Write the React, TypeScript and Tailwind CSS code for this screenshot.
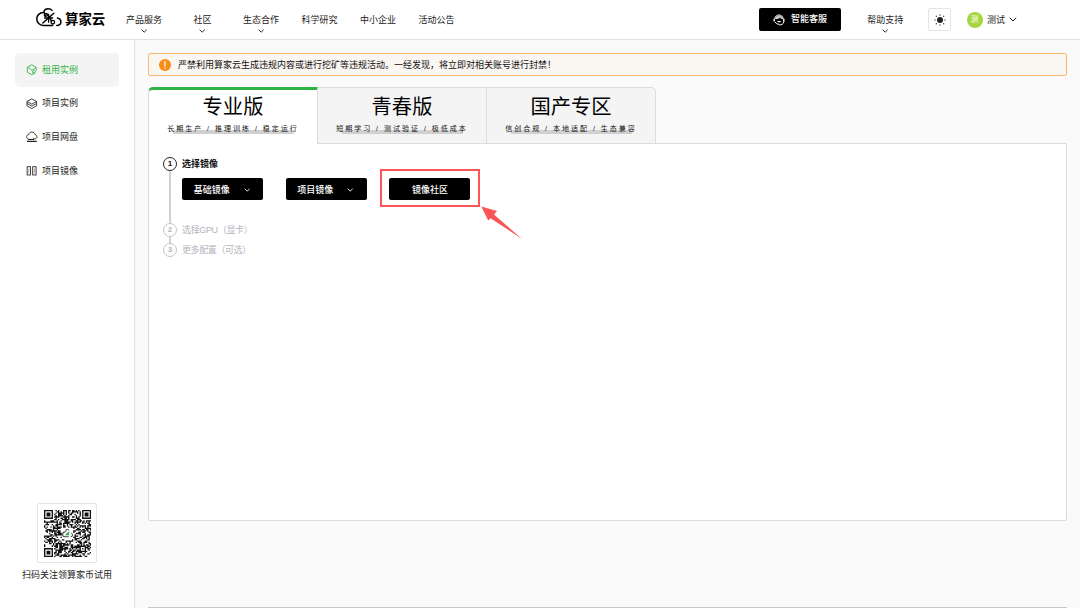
import React from "react";

const FONT = "font-['Liberation_Sans','Noto_Sans_CJK_SC',sans-serif]";

function Chevron({ className, weight = 1.1 }: { className: string; weight?: number }) {
  return (
    <svg viewBox="0 0 8 5" className={className} fill="none" stroke="currentColor" strokeWidth={weight}>
      <path d="M0.8 0.8 L4 4 L7.2 0.8" />
    </svg>
  );
}

function NavItem({ label, arrow }: { label: string; arrow?: boolean }) {
  return (
    <div className="flex h-full w-[58.5px] shrink-0 flex-col items-center pt-[13px] text-[9px] leading-[14px] text-[#222]">
      <span className="whitespace-nowrap">{label}</span>
      {arrow && <Chevron className="mt-[2px] h-[4px] w-[6.4px]" weight={1.2} />}
    </div>
  );
}

function Logo() {
  return (
    <svg viewBox="0 0 26 19" className="h-[19px] w-[26px]" fill="none" stroke="#000" strokeWidth="1.5" strokeLinecap="round">
      <path d="M7.6 4.6 C3.4 4.6 0.8 7.2 0.8 10.9 C0.8 14.6 3.6 17.4 7.2 17.4 H16.6" />
      <path d="M7.8 4.4 C8 2.2 10 0.8 12.2 0.8 C14 0.8 15.2 1.4 16 2.4" />
      <path d="M8.4 4.8 L9.6 8.6 M10.8 5.6 L15.6 13.2 M17.8 5.2 L6.8 15" />
      <path d="M12.6 6.4 V14.2 M8.6 10 H16.6" strokeWidth="1.3" />
      <circle cx="16.8" cy="14.2" r="1.8" strokeWidth="1.3" />
      <circle cx="9.7" cy="7" r="1.5" strokeWidth="1.1" />
      <path d="M21.4 9.9 C23.6 10.4 24.9 11.9 24.9 13.7 C24.9 16 23.3 17.4 20.8 17.4" />
    </svg>
  );
}

function Headset() {
  return (
    <svg viewBox="0 0 12 12" className="h-[12px] w-[12px]" fill="none" stroke="#fff" strokeWidth="1">
      <path d="M1.8 5 C2 2.4 3.7 1 6 1 C8.3 1 10 2.4 10.2 5" />
      <path d="M1.2 4.8 V7.4 M10.8 4.8 V7.8" strokeWidth="1.4" />
      <path d="M2.4 5.2 V3.8 C4.4 1.2 7.6 1.2 9.6 3.8 V5.2 C8.2 5.1 7.4 4.5 6.9 3.6 C6 4.8 4.6 5.3 2.4 5.2 Z" fill="#fff" stroke="none" opacity="0.8" />
      <path d="M4 7 C4.6 8.7 7.4 8.7 8 7 Z" fill="#fff" stroke="none" />
      <path d="M2.2 8 C3 9.8 4.4 10.2 6 10.2 M6 10.9 C8.5 10.9 10.4 10.2 10.8 7.8" />
    </svg>
  );
}

function Sun() {
  return (
    <svg viewBox="0 0 12 12" className="h-[12px] w-[12px]">
      <circle cx="6" cy="6" r="3" fill="#222" />
      <g stroke="#222" strokeWidth="1.1" strokeLinecap="round">
        <path d="M6 .9v.3M6 10.8v.3M.8 6h.4M10.8 6h.4M2.2 2.2l.2.2M9.6 9.6l.2.2M2.2 9.8l.2-.2M9.6 2.4l.2-.2" />
      </g>
    </svg>
  );
}

const sideIcons: Record<string, React.ReactNode> = {
  rent: (
    <>
      <path d="M9.8 9.3 L6 11.2 L1.4 8.7 V3.3 L6 .8 L10.6 3.3 V7.4" />
      <path d="M1.6 4.6 C3.2 3.6 4.2 4.2 4.8 5.4 C5.4 6.6 6.2 7 7 6.2 L10.4 3.8" />
      <path d="M6.6 8 L8.4 6.6 L9.6 7.8 L8.4 9.4 L6.8 9.2 Z" />
    </>
  ),
  layers: (
    <>
      <path d="M6 0.9 L11 3.6 L6 6.4 L1 3.6 Z" />
      <path d="M1 3.6 V5.7 L6 8.5 L11 5.7 V3.6 M1 5.7 V8.2 L6 11 L11 8.2 V5.7" />
    </>
  ),
  cloud: (
    <>
      <path d="M2.6 8.2 C1.2 8 .6 7.1 .6 6 C.6 4.7 1.5 3.9 2.6 3.8 C3.2 2 4.5 1.1 6.2 1.1 C8 1.1 9.3 2.2 9.6 3.9 C10.8 4.2 11.4 5 11.4 6.1 C11.4 7.3 10.6 8.2 9.4 8.2 H8.2 L7.4 7.2" />
      <path d="M2.2 8.9 H8.4 M1 10.8 H11.2" strokeWidth="1.2" />
    </>
  ),
  grid: (
    <>
      <rect x="1.2" y="1.8" width="3.5" height="8.6" />
      <rect x="7" y="1.8" width="3.5" height="8.6" />
      <path d="M2.95 3.6 V8.6 M8.75 3.6 V8.6" strokeWidth="0.4" />
    </>
  ),
};

function SideItem({ icon, label, active }: { icon: string; label: string; active?: boolean }) {
  const tone = active ? "bg-[#f4f4f4] text-[#2fb344]" : "text-[#222]";
  return (
    <div className={`flex h-[33.7px] w-[104px] items-center rounded-[5px] pl-[11px] text-[9px] ${tone}`}>
      <svg viewBox="0 0 12 12" className="mr-[4.5px] h-[11.5px] w-[11.5px]" fill="none" stroke="currentColor" strokeWidth="0.9">
        {sideIcons[icon]}
      </svg>
      <span className="pt-[1.4px]">{label}</span>
    </div>
  );
}

const QR_SIZE = 37;

function buildQr(): string {
  let state = 92731;
  let d = "";
  const random = () => {
    state ^= state << 13;
    state ^= state >>> 17;
    state ^= state << 5;
    return (state >>> 0) / 4294967296;
  };
  const finder = (x: number, y: number) => {
    const m = Math.max(Math.abs(x - 3), Math.abs(y - 3));
    return m === 3 || m <= 1;
  };
  for (let y = 0; y < QR_SIZE; y++) {
    for (let x = 0; x < QR_SIZE; x++) {
      let on = random() < 0.54;
      const e = QR_SIZE - 8;
      if (x < 8 && y < 8) on = x < 7 && y < 7 && finder(x, y);
      else if (x >= e && y < 8) on = x > e && y < 7 && finder(x - e - 1, y);
      else if (x < 8 && y >= e) on = x < 7 && y > e && finder(x, y - e - 1);
      else if (x >= 28 && x <= 32 && y >= 28 && y <= 32) {
        const m = Math.max(Math.abs(x - 30), Math.abs(y - 30));
        on = m !== 1;
      }
      if (x >= 14 && x <= 22 && y >= 14 && y <= 22) on = false;
      if (on) d += `M${x} ${y}h1.05v1.05h-1.05z`;
    }
  }
  return d;
}

const qrPath = buildQr();

function QrCode() {
  return (
    <div className="flex h-[60px] w-[60px] items-center justify-center rounded-[2px] border border-[#e4e4e4] bg-white">
      <svg viewBox="0 0 37 37" className="h-[47px] w-[47px]">
        <path d={qrPath} fill="#111" />
        <g fill="none" stroke="#444" strokeWidth="0.8">
          <path d="M16.8 17.2 C13.8 17.5 14.2 21 16.4 21 H19.5 M17 17 C17.2 15 19 15 19.6 16 M21.2 18.2 C23 18.8 22.8 21 21 21" />
          <path d="M17 20 L20 17" stroke="#2fb344" />
          <circle cx="18.8" cy="19" r="1" fill="#2fb344" stroke="none" />
        </g>
      </svg>
    </div>
  );
}

function Tab({ title, sub, active, last }: { title: string; sub: string; active?: boolean; last?: boolean }) {
  const look = active
    ? "w-[170px] rounded-tl-[5px] border-l border-t-[3px] border-t-[#2fb344] bg-white"
    : "w-[169px] border-b border-t bg-[#f4f4f4] pt-[2px]";
  const side = last ? "rounded-tr-[5px] border-r" : "border-r";
  return (
    <div className={`flex h-[57px] shrink-0 flex-col items-center border-[#dcdcdc] ${look} ${side}`}>
      <div className="mt-[4px] h-[26px] text-[20.3px] leading-[26px] text-black">{title}</div>
      <div className="mt-[3px] flex h-[13px] items-start bg-[linear-gradient(#d0d0d0,#d0d0d0)] bg-[length:121px_4px] bg-[position:6px_7px] bg-no-repeat">
        <span className="whitespace-nowrap text-[7px] leading-[11px] tracking-[2px] text-[#111]">{sub}</span>
      </div>
    </div>
  );
}

function StepDot({ n, active }: { n: number; active?: boolean }) {
  const tone = active ? "border-[#222] text-[#111]" : "border-[#c0c4cc] text-[#b2b5bd]";
  return (
    <div className={`flex h-[14px] w-[14px] shrink-0 items-center justify-center rounded-full border-[1.4px] text-[8px] font-bold leading-none ${tone}`}>
      {n}
    </div>
  );
}

function BlackButton({ label, arrow }: { label: string; arrow?: boolean }) {
  return (
    <div className={`flex h-[22px] w-[81px] items-center justify-center gap-[14px] rounded-[2px] bg-black pt-px text-[9px] font-medium text-white ${arrow ? "pr-[2px]" : ""}`}>
      <span>{label}</span>
      {arrow && <Chevron className="h-[4px] w-[6.5px]" weight={1.1} />}
    </div>
  );
}

function Header() {
  return (
    <header className="flex h-[40px] w-full shrink-0 border-b border-[#dfe1e1] bg-white">
      <div className="flex w-[114.75px] shrink-0 pl-[36px] pt-[8px]">
        <Logo />
        <span className="ml-[3px] mt-[2.5px] whitespace-nowrap text-[13.4px] font-bold leading-[18px] text-black">算家云</span>
      </div>
      <NavItem label="产品服务" arrow />
      <NavItem label="社区" arrow />
      <NavItem label="生态合作" arrow />
      <NavItem label="科学研究" />
      <NavItem label="中小企业" />
      <NavItem label="活动公告" />
      <div className="ml-auto flex w-[321px] shrink-0">
        <div className="mt-[8px] flex h-[23px] w-[82px] items-center justify-center gap-[6px] rounded-[2px] bg-black text-[9px] font-medium text-white">
          <Headset />
          <span className="pt-[1.4px]">智能客服</span>
        </div>
        <div className="ml-[15px]">
          <NavItem label="帮助支持" arrow />
        </div>
        <div className="ml-[13.5px] mt-[8px] flex h-[23px] w-[23px] items-center justify-center rounded-[2px] border border-[#e4e4e4]">
          <Sun />
        </div>
        <div className="ml-[15.5px] mt-[12px] flex h-[16px] w-[16px] items-center justify-center rounded-full bg-[#a5d63f] text-[7.5px] leading-none text-white">
          测
        </div>
        <span className="ml-[4.5px] mt-[13px] text-[9px] leading-[14px] text-[#222]">测试</span>
        <Chevron className="ml-[4px] mt-[17px] h-[5px] w-[8px]" weight={0.9} />
      </div>
    </header>
  );
}

export default function App() {
  return (
    <div className={`flex h-[608px] w-[1080px] flex-col overflow-hidden bg-[#fafafa] ${FONT}`}>
      <Header />
      <div className="flex min-h-0 flex-1">
        <aside className="flex w-[135px] shrink-0 flex-col border-r border-[#dfe1e1] bg-white pt-[13px]">
          <nav className="ml-[15px] flex flex-col">
            <SideItem icon="rent" label="租用实例" active />
            <SideItem icon="layers" label="项目实例" />
            <SideItem icon="cloud" label="项目网盘" />
            <SideItem icon="grid" label="项目镜像" />
          </nav>
          <div className="mb-[26px] mt-auto flex flex-col items-center">
            <QrCode />
            <span className="mt-[5px] whitespace-nowrap text-[9px] leading-[14px] text-[#222]">扫码关注领算家币试用</span>
          </div>
        </aside>
        <main className="flex flex-1 flex-col pl-[13px] pr-[13px] pt-[13px]">
          <div className="flex h-[23px] shrink-0 items-center rounded-[2px] border border-[#fbb870] bg-[#faf6f2] pl-[10px]">
            <svg viewBox="0 0 12 12" className="mr-[7px] h-[12px] w-[12px]">
              <circle cx="6" cy="6" r="6" fill="#fa8c16" />
              <path d="M6 2.6 V6.8" stroke="#fff" strokeWidth="1.3" strokeLinecap="round" />
              <circle cx="6" cy="9" r="0.8" fill="#fff" />
            </svg>
            <span className="text-[9px] leading-[14px] text-[#111]">严禁利用算家云生成违规内容或进行挖矿等违规活动。一经发现，将立即对相关账号进行封禁！</span>
          </div>
          <div className="z-10 mt-[11px] flex h-[57px] shrink-0">
            <Tab title="专业版" sub="长期生产 / 推理训练 / 稳定运行" active />
            <Tab title="青春版" sub="短期学习 / 测试验证 / 极低成本" />
            <Tab title="国产专区" sub="信创合规 / 本地适配 / 生态兼容" last />
          </div>
          <section className="-mt-px h-[378px] shrink-0 rounded-b-[2px] border border-[#dcdcdc] bg-white pl-[14px] pt-[13px]">
            <div className="flex">
              <div className="flex w-[14px] flex-col items-center">
                <StepDot n={1} active />
                <div className="h-[52px] w-[1.4px] bg-[#cfd2da]" />
                <StepDot n={2} />
                <div className="h-[6px] w-[1.4px] bg-[#cfd2da]" />
                <StepDot n={3} />
              </div>
              <div className="ml-[5px] flex flex-col text-[9px] leading-[14px] text-[#b2b5bd]">
                <span className="font-bold text-[#111]">选择镜像</span>
                <div className="relative mt-[7px] flex h-[22px] gap-[22.5px] pl-[0.4px]">
                  <BlackButton label="基础镜像" arrow />
                  <BlackButton label="项目镜像" arrow />
                  <BlackButton label="镜像社区" />
                  <div className="absolute left-[198px] top-[-9px] h-[38px] w-[100px] border-2 border-[#fa5657]" />
                  <svg viewBox="0 0 42 34" className="absolute left-[299px] top-[28px] h-[34px] w-[42px]">
                    <path d="M0.3 0.5 L16 5 L13 8.6 L41 33 L9.5 12.2 L7.2 14.6 Z" fill="#fa5657" />
                  </svg>
                </div>
                <span className="mt-[23px] tracking-[-0.35px]">选择GPU（显卡）</span>
                <span className="mt-[6px] tracking-[-0.4px]">更多配置（可选）</span>
              </div>
            </div>
          </section>
          <div className="mt-auto h-px shrink-0 bg-[#c8c8c8]" />
        </main>
      </div>
    </div>
  );
}
